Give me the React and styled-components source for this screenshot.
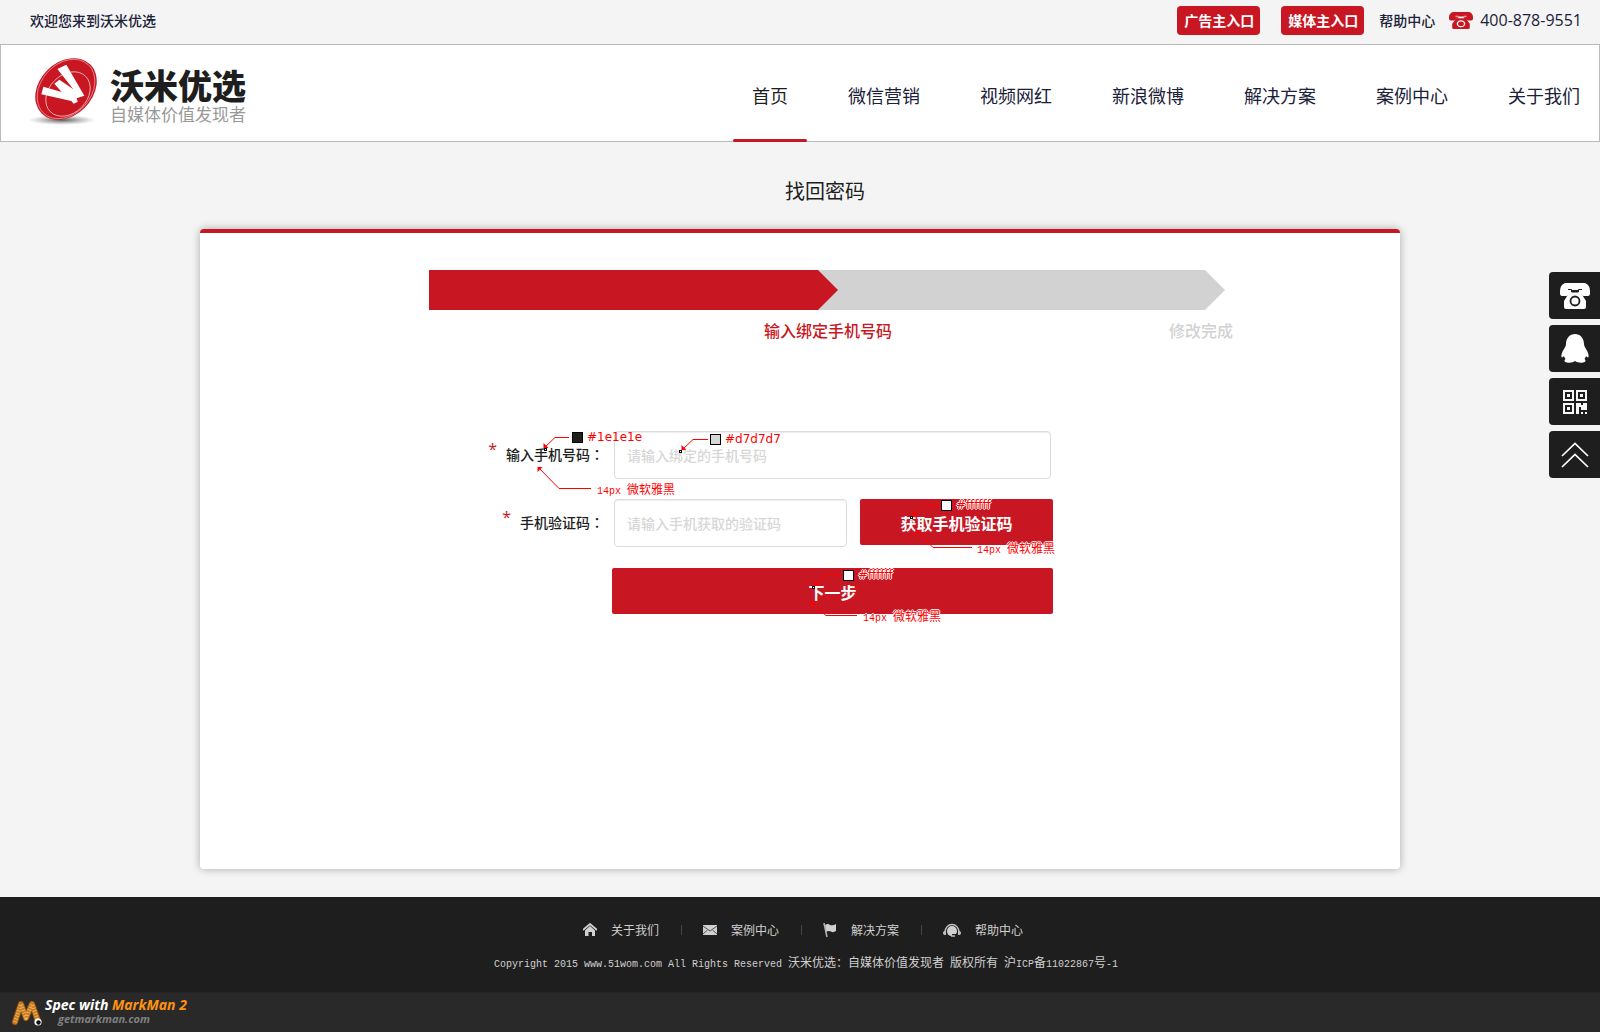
import React from "react";
import styled, { createGlobalStyle, css } from "styled-components";

const RED = "#c81723";
const INK = "#1e1e1e";
const NAVY = "#1a2138";
const SANS = '"Noto Sans CJK SC", "Noto Sans", sans-serif';
const PIXEL = '"Liberation Mono", "Noto Sans CJK SC", monospace';

const Global = createGlobalStyle`
  *, *::before, *::after { box-sizing: border-box; }
  body { margin: 0; background: #f4f4f4; color: ${INK}; font-family: ${SANS}; font-size: 14px; }
  a { color: inherit; text-decoration: none; }
  button, input { font-family: inherit; }
`;

const Page = styled.div`
  display: flex;
  flex-direction: column;
  min-height: 100vh;
`;

const TopBar = styled.div`
  display: flex;
  align-items: center;
  justify-content: space-between;
  height: 44px;
  padding: 0 18px 4px 30px;
  color: ${NAVY};
  font-weight: 500;
  line-height: 20px;
`;

const TopLinks = styled.div`
  display: flex;
  align-items: center;
`;

const EntryLink = styled.a`
  margin-right: 21px;
  padding: 4px 6px 5px 7px;
  border-radius: 4px;
  background: ${RED};
  color: #fff;
  font-weight: 700;
`;

const HelpLink = styled.a`
  margin: 0 14px 0 -6px;
`;

const Hotline = styled.a`
  display: flex;
  align-items: center;
  gap: 7px;
  font-family: "Open Sans", sans-serif;
  font-size: 16px;
  font-weight: 400;
`;

const Header = styled.header`
  display: flex;
  justify-content: space-between;
  height: 98px;
  padding-left: 26px;
  border: 1px solid #bbb;
  background: #fff;
`;

const Brand = styled.a`
  display: flex;
  align-items: center;
  gap: 9px;
`;

const BrandText = styled.span`
  padding-top: 5px;
`;

const BrandName = styled.strong`
  display: block;
  font-size: 34px;
  font-weight: 900;
  line-height: 36px;
`;

const BrandTag = styled.span`
  display: block;
  color: #999;
  font-size: 17px;
  font-weight: 400;
  line-height: 22px;
`;

const Nav = styled.nav`
  display: flex;
  gap: 22px;
`;

const NavLink = styled.a`
  position: relative;
  display: flex;
  align-items: center;
  padding: 4px 19px 0;
  color: ${(p) => (p.$active ? INK : NAVY)};
  font-size: 18px;
  line-height: 28px;

  ${(p) =>
    p.$active &&
    css`
      &::after {
        content: "";
        position: absolute;
        left: 0;
        right: 0;
        bottom: -1px;
        height: 3px;
        border-radius: 2px;
        background: ${RED};
      }
    `}
`;

const Main = styled.main`
  flex: 1;
  padding: 34px 20px 28px;
`;

const Title = styled.h1`
  margin: 0 0 23px;
  padding-left: 50px;
  font-size: 20px;
  font-weight: 400;
  line-height: 30px;
  text-align: center;
`;

const Card = styled.section`
  max-width: 1200px;
  min-height: 640px;
  margin: 0 auto;
  border-top: 4px solid ${RED};
  border-radius: 4px;
  background: #fff;
  box-shadow: 0 0 8px rgba(0, 0, 0, 0.3);
`;

const Steps = styled.ol`
  display: grid;
  grid-template-columns: 409px 387px;
  margin: 0 0 0 229px;
  padding: 37px 0 0;
  list-style: none;
`;

const Step = styled.li`
  position: relative;
  z-index: ${(p) => (p.$done ? 1 : 0)};
  display: flex;
  flex-direction: column;
  align-items: flex-end;
  color: ${(p) => (p.$done ? RED : "#d2d2d2")};
  font-size: 16px;
  font-weight: 500;
  line-height: 24px;

  &::before {
    content: "";
    width: ${(p) => (p.$done ? "100%" : "calc(100% + 21px)")};
    height: 40px;
    margin-bottom: 8px;
    background: currentColor;
    clip-path: polygon(0 0, calc(100% - 20px) 0, 100% 50%, calc(100% - 20px) 100%, 0 100%);
  }
`;

const StepLabel = styled.span`
  margin-right: ${(p) => (p.$done ? "-54px" : "-8px")};
`;

const Form = styled.form`
  position: relative;
  display: grid;
  grid-template-columns: 132px 441px;
  row-gap: 20px;
  margin: 89px 0 0 280px;
`;

const Label = styled.label`
  display: flex;
  align-items: center;
  justify-content: flex-end;
  padding: 0 8px 2px 0;
  font-weight: 500;
  line-height: 20px;
`;

const Star = styled.span`
  align-self: flex-start;
  margin: 8px 9px 0 0;
  color: ${RED};
  font-family: "Open Sans", sans-serif;
  font-size: 16px;
  font-weight: 400;
`;

const Colon = styled.span`
  font-family: "Noto Sans CJK TC", sans-serif;
`;

const Control = styled.div`
  display: flex;
  gap: 13px;
  padding: 0 2px;
`;

const CodeControl = styled(Control)`
  padding-right: 0;
`;

const Input = styled.input`
  flex: 1;
  min-width: 0;
  height: 48px;
  padding: 0 12px;
  border: 1px solid #dcdcdc;
  border-radius: 4px;
  background: #fff;
  box-shadow: inset 0 1px 1px #eee;
  color: ${INK};
  font-size: 14px;
  outline: none;

  &::placeholder {
    color: #d7d7d7;
    font-weight: 500;
    opacity: 1;
  }
`;

const Button = styled.button`
  width: ${(p) => (p.$wide ? "100%" : "193px")};
  height: 46px;
  padding: 1px 0 0;
  border: 0;
  border-radius: 2px;
  background: ${RED};
  color: #fff;
  font-size: 16px;
  font-weight: 700;
  cursor: pointer;
`;

const NextRow = styled.div`
  grid-column: 2;
  padding-top: 1px;
`;

const Notes = styled.div`
  position: absolute;
  inset: 0;
  color: #f00;
  pointer-events: none;
`;

const Leaders = styled.svg`
  position: absolute;
  left: 0;
  top: 0;
  overflow: visible;
`;

const Note = styled.span`
  position: absolute;
  left: ${(p) => p.$x}px;
  top: ${(p) => p.$y}px;
  display: flex;
  align-items: center;
  gap: 4px;
  font-size: 12px;
  line-height: 14px;
  white-space: pre;
`;

const halo = css`
  text-shadow: 1px 0 #fff, -1px 0 #fff, 0 1px #fff, 0 -1px #fff;
`;

const ColorNote = styled(Note)`
  font-family: "DejaVu Sans", sans-serif;
  ${(p) => p.$halo && halo}

  &::before {
    content: "";
    width: 11px;
    height: 11px;
    border: 1px solid #000;
    background: ${(p) => p.$color};
  }
`;

const FontNote = styled(Note)`
  ${(p) => p.$halo && halo}
`;

const Mono = styled.span`
  font-family: ${PIXEL};
  font-size: 10px;
`;

const SideBar = styled.aside`
  position: fixed;
  top: 272px;
  right: 0;
  display: flex;
  flex-direction: column;
  gap: 6px;
`;

const SideButton = styled.button`
  display: grid;
  place-items: center;
  width: 51px;
  height: 47px;
  padding: 0;
  border: 0;
  border-radius: 4px 0 0 4px;
  background: ${INK};
  cursor: pointer;
`;

const Footer = styled.footer`
  padding: 24px 20px 17px;
  background: ${INK};
  color: #d0d0d0;
  font-size: 12px;
`;

const FooterLinks = styled.nav`
  display: flex;
  justify-content: center;
  padding-left: 6px;
`;

const FooterLink = styled.a`
  display: flex;
  align-items: center;
  gap: 14px;
  padding: 0 22px;
  line-height: 18px;

  & + & {
    background: linear-gradient(#444, #444) left center / 1px 10px no-repeat;
  }
`;

const Copyright = styled.p`
  margin: 13px 0 0;
  padding-left: 12px;
  line-height: 20px;
  text-align: center;
  white-space: pre-wrap;
`;

const SpecBar = styled.div`
  display: flex;
  flex-shrink: 0;
  align-items: center;
  gap: 2px;
  height: 40px;
  padding-left: 11px;
  border-top: 1px solid #242424;
  background: #292929;
  font-family: "Open Sans", sans-serif;
  font-style: italic;
  font-weight: 700;
`;

const SpecText = styled.div`
  color: #fff;
  font-size: 14px;
  line-height: 14px;
`;

const Accent = styled.span`
  color: #ff9310;
`;

const SpecSite = styled.a`
  display: block;
  padding: 0 0 2px 13px;
  color: #808080;
  font-size: 11px;
  line-height: 13px;
`;

const Logo = () => (
  <svg width="74" height="72" viewBox="0 0 74 72" aria-hidden="true">
    <defs>
      <radialGradient id="ground">
        <stop offset="0" stopColor="#444" stopOpacity="0.9" />
        <stop offset="1" stopColor="#888" stopOpacity="0" />
      </radialGradient>
    </defs>
    <ellipse cx="35" cy="63" rx="34" ry="5" fill="url(#ground)" />
    <g transform="translate(39 32)">
      <ellipse rx="34.500" ry="26.500" transform="rotate(-45)" fill={RED} />
      <ellipse rx="33" ry="25" transform="rotate(-48)" fill="none" stroke="#eda5aa" strokeWidth="0.700" />
      <ellipse cx="2" cy="5" rx="25" ry="19" transform="rotate(-45 2 5)" fill="none" stroke="#f3c4c7" strokeWidth="0.800" />
    </g>
    <path
      transform="translate(-1 -5) scale(0.33333)"
      d="M52 104 L107 120 L85 95 L100 83 L142 112 L94 51 L121 38 L175 131 L152 139 L155 149 L143 155 L136 147 L46 127Z"
      fill="#fff"
    />
  </svg>
);

const Phone = ({ width, height, color, hole }) => (
  <svg width={width} height={height} viewBox="0 0 30 26" preserveAspectRatio="none" aria-hidden="true">
    <path
      d="M5 0 H25 Q30 2 30 8 V10 Q30 13 28 13 H24 Q21 13 21 10 V7 H9 V10 Q9 13 6 13 H2 Q0 13 0 10 V8 Q0 2 5 0Z"
      fill={color}
    />
    <path d="M9 6 H12 V9 H18 V6 H21 V10 L26 18 V24 Q26 26 24 26 H6 Q4 26 4 24 V18 L9 10Z" fill={color} />
    <path d="M8 6.500 H11.500 V9 H18.500 V6.500 H22" fill="none" stroke={hole} strokeWidth="1" />
    <circle cx="15" cy="18" r="4.500" fill="none" stroke={hole} strokeWidth="1.800" />
  </svg>
);

const Penguin = () => (
  <svg width="28" height="29" viewBox="0 0 28 29" aria-hidden="true">
    <path
      d="M14 0 C19 0 23 4 23 10 C23 12 24 13 25 15 C27 18 28 21 27.500 23 C27 24 26 23 25 22 C25 23 24 24 23.500 25 C25 26 25 28 22 28.500 C19 29 16 28.500 14 27 C12 28.500 9 29 6 28.500 C3 28 3 26 4.500 25 C4 24 3 23 3 22 C2 23 1 24 0.500 23 C0 21 1 18 3 15 C4 13 5 12 5 10 C5 4 9 0 14 0Z"
      fill="#fff"
    />
  </svg>
);

const QrCode = () => (
  <svg width="24" height="24" viewBox="0 0 24 24" fill="none" stroke="#f7f7f7" aria-hidden="true">
    <g strokeWidth="2">
      <rect x="1" y="1" width="9" height="9" />
      <rect x="14" y="1" width="9" height="9" />
      <rect x="1" y="14" width="9" height="9" />
    </g>
    <g fill="#f7f7f7" stroke="none">
      <path d="M4 4h3v3H4zM17 4h3v3h-3zM4 17h3v3H4z" />
      <path d="M13 13h5v2h2v-2h4v7h-6v-3h-2v7h-3zM18 22h2v2h-2zM22 22h2v2h-2z" />
    </g>
  </svg>
);

const ToTop = () => (
  <svg width="28" height="26" viewBox="0 0 28 26" fill="none" stroke="#fff" strokeWidth="1.700" aria-hidden="true">
    <path d="M1 14 L14 1.500 L27 14 M1 25 L14 12.500 L27 25" />
  </svg>
);

const Home = () => (
  <svg width="14" height="14" viewBox="0 0 14 14" aria-hidden="true">
    <path d="M0 7 L7 1 L14 7" fill="none" stroke="#d0d0d0" strokeWidth="1.800" />
    <path d="M2 7.500 L7 3 L12 7.500 V13 H9 V9 H5.500 V13 H2Z" fill="#d0d0d0" />
  </svg>
);

const Mail = () => (
  <svg width="14" height="10" viewBox="0 0 14 10" aria-hidden="true">
    <rect width="14" height="10" fill="#d0d0d0" />
    <path d="M0 1 L7 6 L14 1 M0 9 L4.500 5 M14 9 L9.500 5" fill="none" stroke="#555" />
  </svg>
);

const Flag = () => (
  <svg width="14" height="15" viewBox="0 0 14 15" aria-hidden="true">
    <path d="M1 0 L4 14" stroke="#b0b0b0" strokeWidth="1.600" />
    <path d="M2 2 Q5 0 7 2 Q10 3 13 1 V8 Q10 10 8 8.500 Q5 7.500 3.500 9Z" fill="#d0d0d0" />
  </svg>
);

const Headset = () => (
  <svg width="18" height="14" viewBox="0 0 18 14" aria-hidden="true">
    <path d="M2 9 A7 7.500 0 0 1 16 9" fill="none" stroke="#c0c0c0" strokeWidth="1.300" />
    <path d="M3 7.500 V12 Q0 12 0 10 Q0 8 3 7.500Z M15 7.500 V12 Q18 12 18 10 Q18 8 15 7.500Z" fill="#c0c0c0" />
    <path d="M4 8 A5 5 0 0 1 14 8 Q14 10 13 11 H9 V13 Q4 13 4 8Z" fill="#d0d0d0" />
    <path d="M8 13 H12" stroke="#c0c0c0" strokeWidth="1.500" />
  </svg>
);

const Worm = () => (
  <svg width="32" height="28" viewBox="0 0 32 28" fill="none" strokeLinecap="round" strokeLinejoin="round" aria-hidden="true">
    <path d="M4 23 L10 5 L15 19 L21 5 L27 22" stroke="#7d430b" strokeWidth="6.500" />
    <path d="M4 23 L10 5 L15 19 L21 5 L27 22" stroke="#c67a22" strokeWidth="5" />
    <path d="M4 23 L10 5 L15 19 L21 5 L27 22" stroke="#e9b262" strokeWidth="4" strokeLinecap="butt" strokeDasharray="1 1.800" />
    <circle cx="27" cy="23" r="3.600" fill="#fff" />
    <circle cx="27.500" cy="23.500" r="2.200" fill="#111" />
  </svg>
);

const navItems = ["首页", "微信营销", "视频网红", "新浪微博", "解决方案", "案例中心", "关于我们"];

const footerItems = [
  ["关于我们", Home],
  ["案例中心", Mail],
  ["解决方案", Flag],
  ["帮助中心", Headset],
];

const sideItems = [
  ["电话", <Phone key="p" width={30} height={26} color="#fff" hole={INK} />],
  ["QQ", <Penguin key="q" />],
  ["二维码", <QrCode key="c" />],
  ["返回顶部", <ToTop key="t" />],
];

// Each leader runs from its arrow tip to an elbow, then along to the note.
const leaders = [
  [64, 17, 75, 6, 89],
  [202, 19, 213, 8, 228],
  [58, 36, 79, 57, 111],
  [433, 85, 444, 74, 459],
  [436, 99, 453, 116, 492],
  [335, 155, 346, 144, 360],
  [331, 171, 346, 184, 377],
];

const targets = [
  [65, 18],
  [200, 20],
  [431, 86],
  [333, 156],
];

const Annotations = () => (
  <Notes>
    <Leaders width="573" height="190" aria-hidden="true">
      {leaders.map(([x, y, ex, ey, end]) => {
        const down = ey < y ? -1 : 1;
        return (
          <g key={`${x}-${y}`}>
            <path d={`M${x} ${y} L${ex} ${ey + 0.5} H${end}`} fill="none" stroke="#f00" />
            <path d={`M${x - 0.5} ${y} v${down * 5} l5 ${down * -5}z`} fill="#f00" />
          </g>
        );
      })}
      {targets.map(([x, y]) => (
        <rect key={`${x}-${y}`} x={x - 0.5} y={y - 0.5} width="2" height="2" fill="#fff" stroke="#000" />
      ))}
    </Leaders>
    <ColorNote $x={92} $y={-1} $color="#1e1e1e">#1e1e1e</ColorNote>
    <ColorNote $x={230} $y={1} $color="#d7d7d7">#d7d7d7</ColorNote>
    <FontNote $x={117} $y={51}><span><Mono>14px </Mono>微软雅黑</span></FontNote>
    <ColorNote $x={461} $y={67} $color="#ffffff" $halo>#ffffff</ColorNote>
    <FontNote $x={497} $y={110} $halo><span><Mono>14px </Mono>微软雅黑</span></FontNote>
    <ColorNote $x={363} $y={137} $color="#ffffff" $halo>#ffffff</ColorNote>
    <FontNote $x={383} $y={178} $halo><span><Mono>14px </Mono>微软雅黑</span></FontNote>
  </Notes>
);

export default function App() {
  return (
    <Page lang="zh-CN">
      <Global />
      <TopBar>
        <span>欢迎您来到沃米优选</span>
        <TopLinks>
          <EntryLink href="#advertiser">广告主入口</EntryLink>
          <EntryLink href="#media">媒体主入口</EntryLink>
          <HelpLink href="#help">帮助中心</HelpLink>
          <Hotline href="tel:4008789551">
            <Phone width={24} height={17} color={RED} hole="#f4f4f4" />
            400-878-9551
          </Hotline>
        </TopLinks>
      </TopBar>
      <Header>
        <Brand href="#home">
          <Logo />
          <BrandText>
            <BrandName>沃米优选</BrandName>
            <BrandTag>自媒体价值发现者</BrandTag>
          </BrandText>
        </Brand>
        <Nav>
          {navItems.map((name, i) => (
            <NavLink key={name} href={`#nav-${i}`} $active={i === 0}>
              {name}
            </NavLink>
          ))}
        </Nav>
      </Header>
      <Main>
        <Title>找回密码</Title>
        <Card>
          <Steps>
            <Step $done>
              <StepLabel $done>输入绑定手机号码</StepLabel>
            </Step>
            <Step>
              <StepLabel>修改完成</StepLabel>
            </Step>
          </Steps>
          <Form onSubmit={(e) => e.preventDefault()}>
            <Label htmlFor="phone">
              <Star>*</Star>输入手机号码<Colon>：</Colon>
            </Label>
            <Control>
              <Input id="phone" type="tel" placeholder="请输入绑定的手机号码" />
            </Control>
            <Label htmlFor="code">
              <Star>*</Star>手机验证码<Colon>：</Colon>
            </Label>
            <CodeControl>
              <Input id="code" type="text" placeholder="请输入手机获取的验证码" />
              <Button type="button">获取手机验证码</Button>
            </CodeControl>
            <NextRow>
              <Button type="submit" $wide>下一步</Button>
            </NextRow>
            <Annotations />
          </Form>
        </Card>
      </Main>
      <Footer>
        <FooterLinks>
          {footerItems.map(([name, Icon]) => (
            <FooterLink key={name} href={`#${name}`}>
              <Icon />
              {name}
            </FooterLink>
          ))}
        </FooterLinks>
        <Copyright>
          <Mono>Copyright 2015 www.51wom.com All Rights Reserved </Mono>沃米优选：自媒体价值发现者
          <Mono> </Mono>版权所有<Mono> </Mono>沪<Mono>ICP</Mono>备<Mono>11022867</Mono>号<Mono>-1</Mono>
        </Copyright>
      </Footer>
      <SpecBar>
        <Worm />
        <div>
          <SpecText>Spec with <Accent>MarkMan 2</Accent></SpecText>
          <SpecSite href="#markman">getmarkman.com</SpecSite>
        </div>
      </SpecBar>
      <SideBar>
        {sideItems.map(([name, icon]) => (
          <SideButton key={name} type="button" aria-label={name}>
            {icon}
          </SideButton>
        ))}
      </SideBar>
    </Page>
  );
}
